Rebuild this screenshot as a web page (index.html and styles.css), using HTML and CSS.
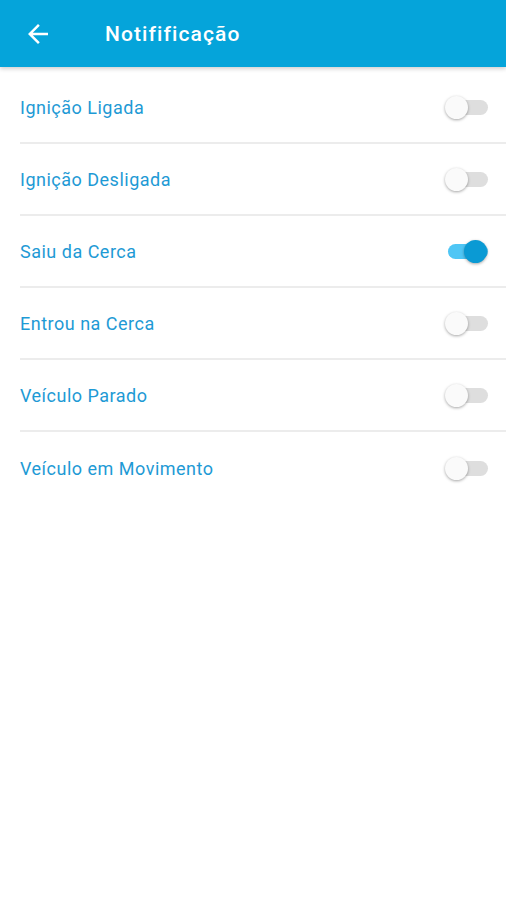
FILE: index.html
```html
<!DOCTYPE html>
<html lang="pt-BR">
<head>
    <meta charset="UTF-8">
    <meta name="viewport" content="width=device-width, initial-scale=1.0">
    <title>Notifificação</title>
    <link rel="stylesheet" href="styles.css">
</head>
<body>
    <div class="toolbar">
        <button class="back-button" aria-label="Voltar">
            <svg viewBox="0 0 24 24" width="30" height="30">
                <path d="M20 11H7.83l5.59-5.59L12 4l-8 8 8 8 1.41-1.41L7.83 13H20v-2z" fill="#ffffff"/>
            </svg>
        </button>
        <h1 class="toolbar-title">Notifificação</h1>
    </div>

    <main class="settings-list">
        <label class="setting-row">
            <span class="setting-label">Ignição Ligada</span>
            <input type="checkbox" class="switch">
        </label>
        <label class="setting-row">
            <span class="setting-label">Ignição Desligada</span>
            <input type="checkbox" class="switch">
        </label>
        <label class="setting-row">
            <span class="setting-label">Saiu da Cerca</span>
            <input type="checkbox" class="switch" checked>
        </label>
        <label class="setting-row">
            <span class="setting-label">Entrou na Cerca</span>
            <input type="checkbox" class="switch">
        </label>
        <label class="setting-row">
            <span class="setting-label">Veículo Parado</span>
            <input type="checkbox" class="switch">
        </label>
        <label class="setting-row">
            <span class="setting-label">Veículo em Movimento</span>
            <input type="checkbox" class="switch">
        </label>
    </main>
</body>
</html>
```

FILE: styles.css
```css
* {
    margin: 0;
    padding: 0;
    box-sizing: border-box;
}

body {
    font-family: Roboto, 'Noto Sans', sans-serif;
    background-color: #ffffff;
    min-height: 100vh;
}

.toolbar {
    height: 67px;
    background-color: #05a4da;
    display: flex;
    align-items: center;
    padding-left: 23px;
    box-shadow: 0 2px 4px rgba(0, 0, 0, 0.18);
    position: relative;
}

.back-button {
    background: none;
    border: none;
    width: 30px;
    height: 30px;
    display: flex;
    align-items: center;
    justify-content: center;
    cursor: pointer;
}

.toolbar-title {
    color: #ffffff;
    font-size: 21px;
    font-weight: 500;
    letter-spacing: 1.1px;
    margin-left: 52px;
    margin-top: 1px;
}

.settings-list {
    padding: 5px 0 0 20px;
}

.setting-row {
    height: 72px;
    display: flex;
    align-items: center;
    justify-content: space-between;
    padding-right: 18px;
    border-bottom: 2px solid #ececec;
    cursor: pointer;
}

.setting-row:last-child {
    border-bottom: none;
}

.setting-label {
    color: #1e9ad5;
    font-size: 18px;
    letter-spacing: 0.5px;
    margin-top: 1px;
}

.switch {
    appearance: none;
    -webkit-appearance: none;
    position: relative;
    width: 44px;
    height: 26px;
    cursor: pointer;
    flex-shrink: 0;
}

.switch::before {
    content: '';
    position: absolute;
    left: 4px;
    right: 0;
    top: 6px;
    height: 15px;
    border-radius: 8px;
    background-color: #dedede;
}

.switch::after {
    content: '';
    position: absolute;
    left: 1px;
    top: 2px;
    width: 23px;
    height: 23px;
    border-radius: 50%;
    background-color: #fafafa;
    box-shadow: 0 1px 3px rgba(0, 0, 0, 0.35);
}

.switch:checked::before {
    background-color: #4fc6f5;
}

.switch:checked::after {
    left: 20px;
    background-color: #0a9ad4;
}
```
